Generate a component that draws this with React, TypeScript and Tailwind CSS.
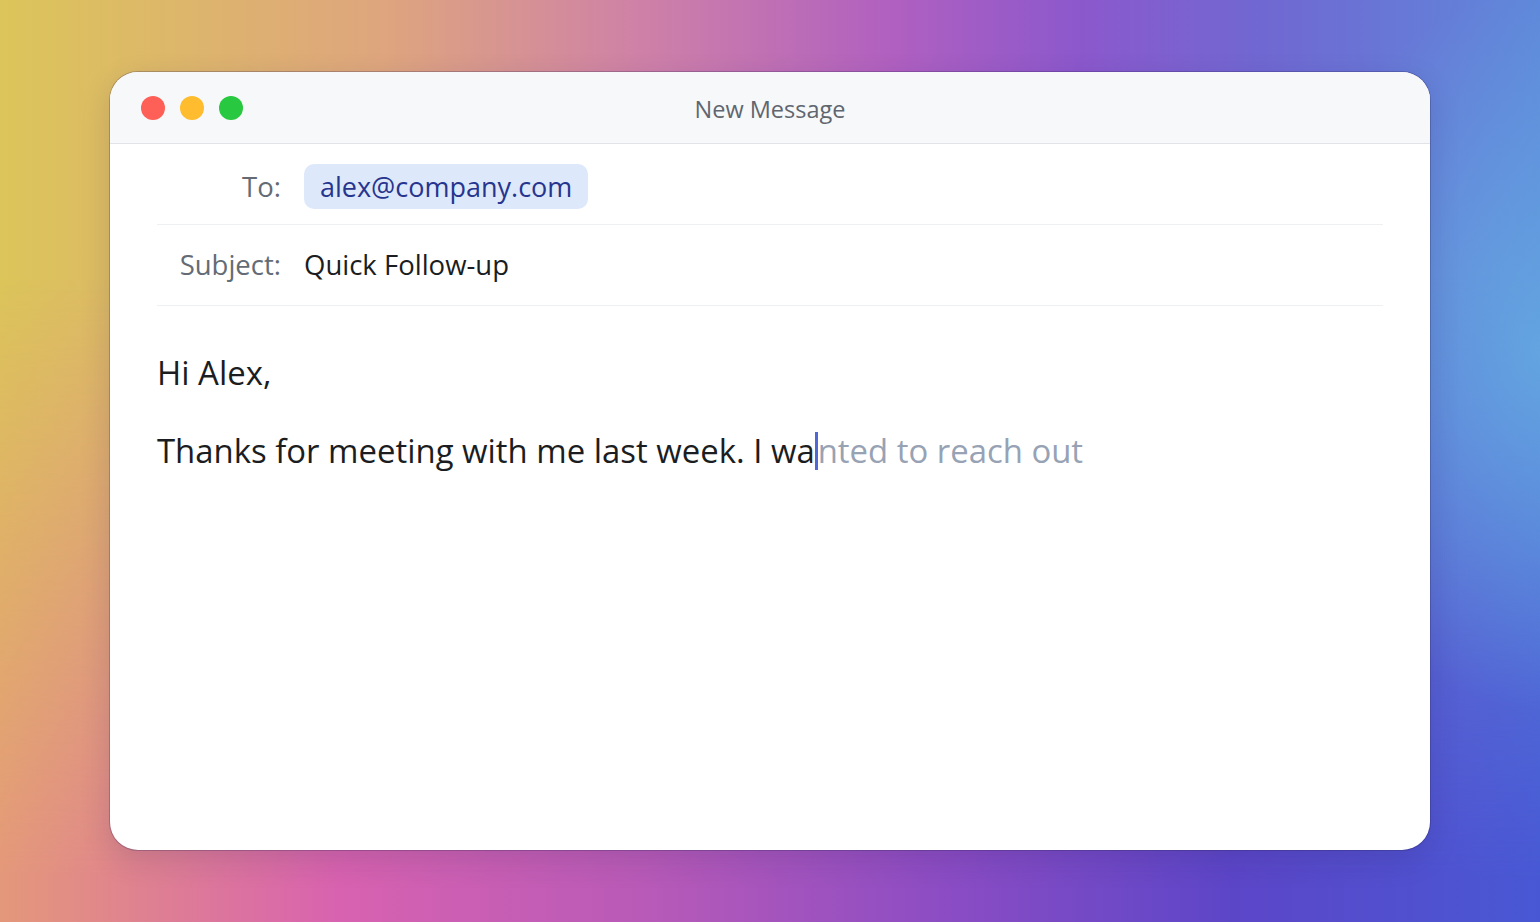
import React from 'react';

function TrafficLights() {
  return (
    <div className="flex items-center gap-[15px]">
      <span className="block h-6 w-6 rounded-full bg-[#fe5f57]" />
      <span className="block h-6 w-6 rounded-full bg-[#febc2e]" />
      <span className="block h-6 w-6 rounded-full bg-[#28c840]" />
    </div>
  );
}

function FieldRow({ label, children, className = '' }: { label: string; children: React.ReactNode; className?: string }) {
  return (
    <div className={`flex h-[81px] items-center border-b border-[#eef0f2] ${className}`}>
      <div className="w-[124px] text-right text-[27.5px] text-[#646b75]">{label}</div>
      <div className="ml-[23px] flex items-center">{children}</div>
    </div>
  );
}

export default function App() {
  return (
    <div
      className="relative h-[922px] w-full overflow-hidden bg-[linear-gradient(to_right,#dcc55a_0%,#dea57e_25%,#ce80a8_42%,#b060c0_58%,#8c58cc_70%,#7068d2_82%,#5f88da_100%)]"
      style={{ fontFamily: '"Open Sans", "Noto Sans", sans-serif' }}
    >
      {/* bottom colour band */}
      <div className="absolute inset-0 bg-[linear-gradient(to_right,#e4987a_0%,#d862b0_22%,#b85ab8_42%,#8a4cc4_62%,#5c46c8_80%,#4858d4_100%)] [mask-image:linear-gradient(to_bottom,transparent_30%,black_95%)]" />
      {/* soft blue glow right */}
      <div className="absolute inset-0 bg-[radial-gradient(ellipse_260px_360px_at_100%_38%,rgba(100,170,226,0.85),rgba(100,170,226,0)_100%)]" />

      <div className="relative flex h-full items-start justify-center pt-[72px]">
        <div className="flex h-[778px] w-[1320px] flex-col overflow-hidden rounded-[28px] bg-white shadow-[0_0_0_1px_rgba(40,30,80,0.25),0_10px_30px_rgba(30,20,80,0.15)]">
          {/* title bar */}
          <div className="relative flex h-[72px] shrink-0 items-center border-b border-[#e1e3e6] bg-[#f7f8f9] px-[31px]">
            <TrafficLights />
            <div className="absolute inset-x-0 translate-y-[2px] text-center text-[23.5px] text-[#5f6670]">New Message</div>
          </div>

          {/* fields */}
          <div className="flex flex-1 flex-col px-[47px]">
            <FieldRow label="To:" className="pt-[5px]">
              <span className="rounded-[10px] bg-[#dde9fb] px-4 py-[4px] text-[27px] leading-[37px] text-[#27358f]">
                alex@company.com
              </span>
            </FieldRow>
            <FieldRow label="Subject:">
              <span className="text-[27.5px] text-[#1b1d21]">Quick Follow-up</span>
            </FieldRow>

            {/* body */}
            <div className="pt-[44px] text-[32.9px] leading-[46px] text-[#1b1d21]">
              <p>Hi Alex,</p>
              <p className="mt-[29px]">
                Thanks for meeting with me last week. I wa
                <span className="relative inline-block h-[38px] w-[3px] translate-y-[7px] bg-[#4f68d6] align-baseline" />
                <span className="text-[#97a2b4]">nted to reach out</span>
              </p>
            </div>
          </div>
        </div>
      </div>
    </div>
  );
}
